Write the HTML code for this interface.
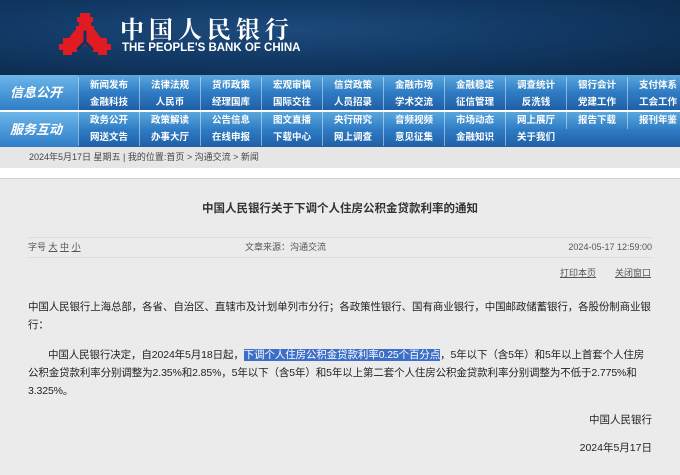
<!DOCTYPE html>
<html><head><meta charset="utf-8"><style>
*{margin:0;padding:0;box-sizing:border-box}
body{width:680px;height:475px;overflow:hidden;background:#ebebeb;font-family:"Liberation Sans","Noto Sans CJK SC",sans-serif;color:#222;position:relative}
.hd{position:absolute;left:0;top:0;width:680px;height:75px;background:radial-gradient(ellipse at 40% 40%,#1d4a7c 0%,#123a66 45%,#0b2747 100%)}
.nav{position:absolute;left:0;top:75px;width:680px;height:72px;background:#fff}
.grp{position:absolute;left:0;width:680px;height:35px;background:linear-gradient(180deg,#5aa7de 0%,#2f7cc4 50%,#1f5fa6 100%)}
.lab{position:absolute;left:0;width:78px;height:35px;background:linear-gradient(180deg,#6cb6ea,#2e7dc6);color:#fff;font-style:italic;font-weight:bold;font-size:13px;line-height:35px;padding-left:10px}
.it{position:absolute;width:61px;height:17px;line-height:17px;text-align:center;color:#fff;font-weight:bold;font-size:9.5px;border-left:1px solid rgba(255,255,255,.45)}
.bc{position:absolute;left:0;top:147px;width:680px;height:21px;background:#e6e6e6;font-size:9px;color:#444;line-height:21px;padding-left:29px}
.wh{position:absolute;left:0;top:168px;width:680px;height:11px;background:#fff;border-bottom:1px solid #d0d0d0}
.t{position:absolute;font-size:10.5px;white-space:nowrap;color:#222;line-height:14px}
.p{letter-spacing:-0.12px}
</style></head><body>
<div class="hd">
<svg style="position:absolute;left:58px;top:12px" width="54" height="47" viewBox="0 0 54 47">
<g fill="#e01b22">
<path d="M22 1h10v4h3v5h-2v4h3v6h-18v-6h3v-4h-2V5h3z"/>
<path d="M17 18h20l6 8h6v6h4v6h-4v5h-9v-3h-4l-9-7-9 7h-4v3H5v-5H1v-6h4v-6h6z"/>
</g>
<g stroke="#0f3260" stroke-width="3" fill="none" stroke-linecap="round">
<path d="M27 20v10M27 30l-7 7M27 30l7 7"/>
</g>
</svg>
<div style="position:absolute;left:120px;top:13px;line-height:30px;color:#fff;font-size:24px;font-weight:bold;letter-spacing:5px;font-family:'Noto Serif CJK SC',serif">中国人民银行</div>
<div style="position:absolute;left:122px;top:41px;line-height:14px;color:#fff;font-size:11.5px;font-weight:bold">THE PEOPLE'S BANK OF CHINA</div>
</div>
<div class="nav">
<div class="grp" style="top:0"></div>
<div class="grp" style="top:37px"></div>
<div class="lab" style="top:0">信息公开</div>
<div class="lab" style="top:37px">服务互动</div>
</div>
<div id="items"></div>
<div class="bc">2024年5月17日 星期五 | 我的位置:首页 &gt; 沟通交流 &gt; 新闻</div>
<div class="wh"></div>
<div class="t" style="left:0;width:680px;text-align:center;top:202px;font-size:11.5px;font-weight:bold;color:#333">中国人民银行关于下调个人住房公积金贷款利率的通知</div>
<div style="position:absolute;left:28px;top:237px;width:624px;border-top:1px solid #ddd"></div>
<div class="t" style="left:28px;top:240px;font-size:9px;color:#555">字号 <u>大</u> <u>中</u> <u>小</u></div>
<div class="t" style="left:245px;top:240px;font-size:9px;color:#555">文章来源：沟通交流</div>
<div class="t" style="right:28px;top:240px;font-size:9px;color:#555">2024-05-17 12:59:00</div>
<div style="position:absolute;left:28px;top:257px;width:624px;border-top:1px solid #ddd"></div>
<div class="t" style="left:560px;top:266px;font-size:9px;color:#555"><u>打印本页</u></div>
<div class="t" style="left:615px;top:266px;font-size:9px;color:#555"><u>关闭窗口</u></div>
<div class="t p" style="left:28px;top:300px">中国人民银行上海总部，各省、自治区、直辖市及计划单列市分行；各政策性银行、国有商业银行，中国邮政储蓄银行，各股份制商业银</div>
<div class="t p" style="left:28px;top:318px">行：</div>
<div class="t p" style="left:48px;top:348px">中国人民银行决定，自2024年5月18日起，<span style="background:#3d6fc9;color:#fff">下调个人住房公积金贷款利率0.25个百分点</span>，5年以下（含5年）和5年以上首套个人住房</div>
<div class="t p" style="left:28px;top:366px">公积金贷款利率分别调整为2.35%和2.85%，5年以下（含5年）和5年以上第二套个人住房公积金贷款利率分别调整为不低于2.775%和</div>
<div class="t p" style="left:28px;top:384px">3.325%。</div>
<div class="t" style="right:28px;top:413px">中国人民银行</div>
<div class="t" style="right:28px;top:441px">2024年5月17日</div>
<script>
var rows=[["新闻发布","法律法规","货币政策","宏观审慎","信贷政策","金融市场","金融稳定","调查统计","银行会计","支付体系"],
["金融科技","人民币","经理国库","国际交往","人员招录","学术交流","征信管理","反洗钱","党建工作","工会工作"],
["政务公开","政策解读","公告信息","图文直播","央行研究","音频视频","市场动态","网上展厅","报告下载","报刊年鉴"],
["网送文告","办事大厅","在线申报","下载中心","网上调查","意见征集","金融知识","关于我们"]];
var tops=[77,94,112,129],h="";
rows.forEach(function(r,i){r.forEach(function(s,j){h+='<div class="it" style="left:'+(78+j*61)+'px;top:'+tops[i]+'px">'+s+'</div>';});});
document.getElementById('items').innerHTML=h;
</script>
</body></html>
